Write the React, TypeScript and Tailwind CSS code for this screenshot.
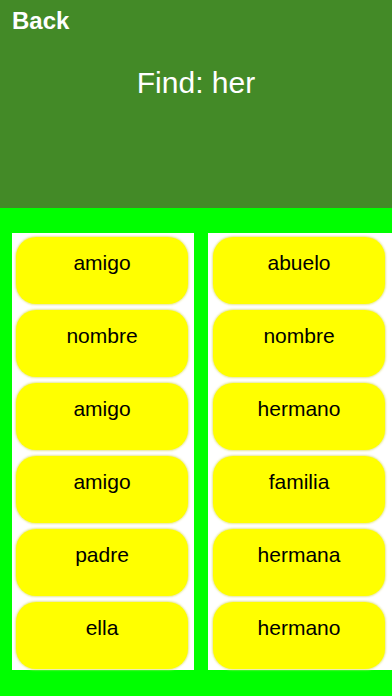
const left = ['amigo', 'nombre', 'amigo', 'amigo', 'padre', 'ella'];
const right = ['abuelo', 'nombre', 'hermano', 'familia', 'hermana', 'hermano'];

const WordButton = ({ word }: { word: string }) => (
  <button className="h-[67px] w-[172px] rounded-[20px] bg-[#ffff00] pb-[16px] text-[21px] leading-none text-black shadow-[0_0_2px_1px_rgba(230,230,140,0.9)]">
    {word}
  </button>
);

export default function App() {
  return (
    <div
      className="flex h-[696px] w-[392px] flex-col overflow-hidden bg-[#00ff00]"
      style={{ fontFamily: '"Liberation Sans", Arial, sans-serif' }}
    >
      <header className="flex h-[208px] shrink-0 flex-col bg-[#438a27] text-white">
        <div className="pl-[12px] pt-[9px] text-[24px] font-bold leading-none">Back</div>
        <div className="mt-[35px] text-center text-[30px] leading-none">Find: her</div>
      </header>
      <div className="mt-[25px] flex h-[437px] gap-[14px] pl-[12px]">
        <div className="flex w-[182px] flex-col gap-[6px] bg-white pl-[4px] pt-[4px]">
          {left.map((w, i) => (
            <WordButton key={i} word={w} />
          ))}
        </div>
        <div className="flex flex-1 flex-col gap-[6px] bg-white pl-[5px] pt-[4px]">
          {right.map((w, i) => (
            <WordButton key={i} word={w} />
          ))}
        </div>
      </div>
    </div>
  );
}
